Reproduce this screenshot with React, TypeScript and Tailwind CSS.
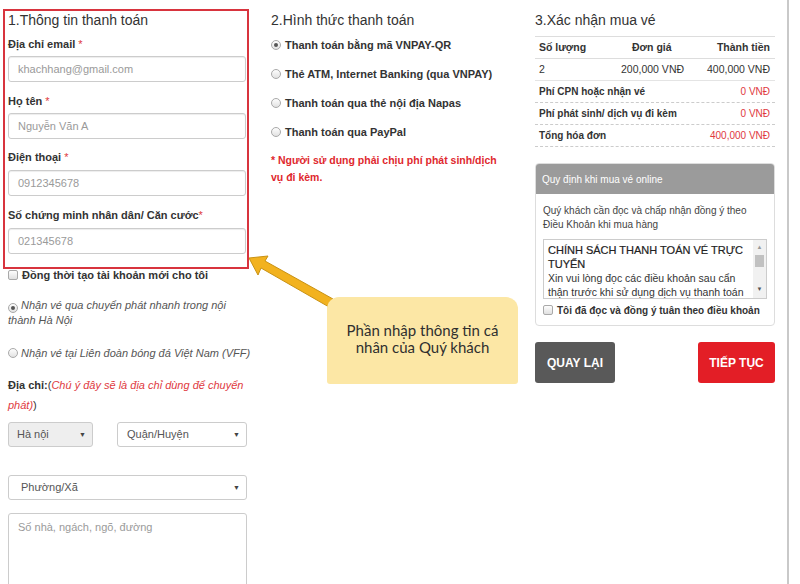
import React from "react";

const Label = ({ text, mt }: { text: string; mt: string }) => (
  <div className={`${mt} text-[11px] leading-[14px] font-bold text-[#333]`}>
    {text}
    <span className="text-[#e0393e] font-normal"> *</span>
  </div>
);

const Input = ({ ph, mt }: { ph: string; mt: string }) => (
  <div
    className={`${mt} h-[26px] w-[238px] border border-[#ccc] rounded-[3px] shadow-[inset_0_1px_1px_rgba(0,0,0,0.075)] flex items-center pl-[9px] text-[11px] text-[#9a9a9a]`}
  >
    {ph}
  </div>
);

const Radio = ({ on }: { on?: boolean }) => (
  <span className="inline-flex items-center justify-center w-[10px] h-[10px] rounded-full border border-[#a9a9a9] bg-[linear-gradient(#fdfdfd,#e2e2e2)] shrink-0">
    {on ? <span className="w-[4px] h-[4px] rounded-full bg-[#555]" /> : null}
  </span>
);

const Check = () => (
  <span className="inline-block w-[10px] h-[10px] rounded-[2px] border border-[#a9a9a9] bg-[linear-gradient(#fdfdfd,#e0e0e0)] shrink-0" />
);

const Caret = () => <span className="text-[7px] text-[#444] leading-none">▼</span>;

export default function App() {
  return (
    <div className="relative w-[800px] h-[584px] overflow-hidden bg-white font-['Liberation_Sans',Arial,sans-serif] text-[#333] flex">
      {/* Left column */}
      <div className="ml-[3px] mt-[9px] w-[246px] flex flex-col shrink-0">
        <div className="relative z-10 border-2 border-[#d8343e] pl-[3px] pr-[1px] pb-[13px]">
          <div className="text-[14px] leading-[18px] text-[#333]">1.Thông tin thanh toán</div>
          <Label text="Địa chỉ email" mt="mt-[8px]" />
          <Input ph="khachhang@gmail.com" mt="mt-[5px]" />
          <Label text="Họ tên" mt="mt-[12px]" />
          <Input ph="Nguyễn Văn A" mt="mt-[5px]" />
          <Label text="Điện thoại" mt="mt-[11px]" />
          <Input ph="0912345678" mt="mt-[6px]" />
          <div className="mt-[12px] text-[11px] leading-[14px] font-bold text-[#333]">
            Số chứng minh nhân dân/ Căn cước<span className="text-[#e0393e] font-normal">*</span>
          </div>
          <Input ph="021345678" mt="mt-[6px]" />
        </div>
        <div className="pl-[5px] flex flex-col">
          <div className="-mt-[1px] flex items-center gap-[4px] h-[14px] text-[11px] font-bold text-[#333]">
            <Check />
            <span>Đồng thời tạo tài khoản mới cho tôi</span>
          </div>
          <div className="mt-[16px] text-[11px] leading-[15px] italic text-[#555] pr-[8px]">
            <span className="inline-flex align-[-1px] mr-[3px]">
              <Radio on />
            </span>
            Nhận vé qua chuyển phát nhanh trong nội thành Hà Nội
          </div>
          <div className="mt-[18px] text-[11px] leading-[15px] italic text-[#555] whitespace-nowrap">
            <span className="inline-flex align-[-1px] mr-[3px]">
              <Radio />
            </span>
            Nhận vé tại Liên đoàn bóng đá Việt Nam (VFF)
          </div>
          <div className="mt-[14px] text-[11px] leading-[20px] text-[#333] pr-[4px]">
            <span className="font-bold">Địa chỉ:</span>(
            <span className="italic text-[#e0393e]">Chú ý đây sẽ là địa chỉ dùng để chuyển phát)</span>)
          </div>
          <div className="mt-[7px] flex gap-[24px]">
            <div className="h-[25px] w-[85px] border border-[#ccc] rounded-[3px] bg-[#eee] flex items-center justify-between pl-[8px] pr-[6px] text-[11px] text-[#555]">
              <span>Hà nội</span>
              <Caret />
            </div>
            <div className="h-[25px] w-[130px] border border-[#ccc] rounded-[3px] bg-white flex items-center justify-between pl-[9px] pr-[6px] text-[11px] text-[#555]">
              <span>Quận/Huyện</span>
              <Caret />
            </div>
          </div>
          <div className="mt-[28px] h-[25px] w-[239px] border border-[#ccc] rounded-[3px] bg-white flex items-center justify-between pl-[12px] pr-[6px] text-[11px] text-[#555]">
            <span>Phường/Xã</span>
            <Caret />
          </div>
          <div className="mt-[13px] h-[100px] w-[239px] border border-[#ccc] rounded-[3px] bg-white pl-[9px] pt-[5px] text-[11px] leading-[16px] text-[#9a9a9a] shrink-0">
            Số nhà, ngách, ngõ, đường
          </div>
        </div>
      </div>

      {/* Middle column */}
      <div className="ml-[22px] pt-[11px] w-[249px] shrink-0 flex flex-col">
        <div className="text-[14px] leading-[18px] text-[#333]">2.Hình thức thanh toán</div>
        {[
          { t: "Thanh toán bằng mã VNPAY-QR", on: true },
          { t: "Thẻ ATM, Internet Banking (qua VNPAY)" },
          { t: "Thanh toán qua thẻ nội địa Napas" },
          { t: "Thanh toán qua PayPal" },
        ].map((r, i) => (
          <div
            key={i}
            className={`${i === 0 ? "mt-[8px]" : "mt-[13px]"} h-[16px] flex items-center gap-[4px] text-[11px] font-bold text-[#333] whitespace-nowrap`}
          >
            <Radio on={r.on} />
            <span>{r.t}</span>
          </div>
        ))}
        <div className="mt-[12px] text-[10.5px] leading-[17px] font-bold text-[#e0282e] pr-[16px]">
          * Người sử dụng phải chịu phí phát sinh/dịch vụ đi kèm.
        </div>
      </div>

      {/* Right column */}
      <div className="ml-[15px] pt-[11px] w-[240px] shrink-0 flex flex-col">
        <div className="text-[14px] leading-[18px] text-[#333]">3.Xác nhận mua vé</div>
        <div className="mt-[7px] border-t border-[#ddd] text-[10px] text-[#333]">
          <div className="h-[22px] flex items-center border-b border-[#ddd] font-bold text-[10.5px]">
            <span className="w-[97px] pl-[4px]">Số lượng</span>
            <span className="flex-1">Đơn giá</span>
            <span className="pr-[5px]">Thành tiền</span>
          </div>
          <div className="h-[22px] flex items-center border-b border-[#e4e4e4] text-[10.5px]">
            <span className="w-[86px] pl-[4px]">2</span>
            <span className="flex-1">200,000 VNĐ</span>
            <span className="pr-[5px]">400,000 VNĐ</span>
          </div>
          <div className="h-[22px] flex items-center justify-between border-b border-dashed border-[#ccc]">
            <span className="pl-[4px] font-bold">Phí CPN hoặc nhận vé</span>
            <span className="pr-[5px] text-[#e0393e]">0 VNĐ</span>
          </div>
          <div className="h-[22px] flex items-center justify-between border-b border-dashed border-[#ccc]">
            <span className="pl-[4px] font-bold">Phí phát sinh/ dịch vụ đi kèm</span>
            <span className="pr-[5px] text-[#e0393e]">0 VNĐ</span>
          </div>
          <div className="h-[22px] flex items-center justify-between border-b border-dashed border-[#ccc]">
            <span className="pl-[4px] font-bold">Tổng hóa đơn</span>
            <span className="pr-[5px] text-[#e0393e]">400,000 VNĐ</span>
          </div>
        </div>

        <div className="mt-[16px] border border-[#ddd] rounded-[4px] overflow-hidden">
          <div className="h-[30px] bg-[#9b9b9b] flex items-center pl-[6px] text-[10px] text-white">
            Quy định khi mua vé online
          </div>
          <div className="px-[7px] pt-[10px] pb-[8px]">
            <div className="text-[10px] leading-[14px] text-[#444]">
              Quý khách cần đọc và chấp nhận đồng ý theo
              <br />
              Điều Khoản khi mua hàng
            </div>
            <div className="mt-[7px] h-[60px] border border-[#ccc] flex overflow-hidden">
              <div className="flex-1 pl-[4px] pt-[3px] text-[10.5px] leading-[14px] text-[#333]">
                <div className="text-[11px] text-[#222] [-webkit-text-stroke:0.2px_#222]">CHÍNH SÁCH THANH TOÁN VÉ TRỰC TUYẾN</div>
                <div>Xin vui lòng đọc các điều khoản sau cẩn thận trước khi sử dụng dịch vụ thanh toán</div>
              </div>
              <div className="w-[13px] bg-[#f1f1f1] flex flex-col items-center pt-[3px]">
                <span className="text-[6px] leading-[8px] text-[#999]">▲</span>
                <span className="mt-[4px] w-[9px] h-[12px] bg-[#c1c1c1]" />
                <span className="mt-auto mb-[5px] text-[6px] leading-[8px] text-[#555]">▼</span>
              </div>
            </div>
            <div className="mt-[4px] h-[14px] flex items-center gap-[4px] text-[10px] font-bold text-[#333] whitespace-nowrap">
              <Check />
              <span>Tôi đã đọc và đồng ý tuân theo điều khoản</span>
            </div>
          </div>
        </div>

        <div className="mt-[16px] flex justify-between">
          <div className="w-[80px] h-[41px] rounded-[3px] bg-[#595959] flex items-center justify-center text-[12px] font-bold text-white">
            QUAY LẠI
          </div>
          <div className="w-[77px] h-[41px] rounded-[3px] bg-[#e31e26] flex items-center justify-center text-[12px] font-bold text-white">
            TIẾP TỤC
          </div>
        </div>
      </div>

      <div className="ml-[12px] w-[2px] h-full bg-[#c9c9c9] shrink-0" />

      {/* Annotation arrow */}
      <svg className="absolute left-[240px] top-[240px]" width="110" height="80" viewBox="240 240 110 80">
        <polygon
          points="249,258 268,256 265,261 333,299 329,307 261,268 258,275"
          fill="#f2b21f"
          stroke="#c99214"
          strokeWidth="1"
          strokeLinejoin="round"
        />
      </svg>

      {/* Annotation callout */}
      <div className="absolute left-[327px] top-[297px] w-[191px] h-[87px] rounded-t-[12px] rounded-b-[3px] bg-[#fce7a5] flex items-center justify-center text-center font-['Lato',sans-serif] text-[15px] leading-[17px] text-[#2f2f2f]">
        <div className="-mt-[3px]">
          Phần nhập thông tin cá
          <br />
          nhân của Quý khách
        </div>
      </div>
    </div>
  );
}
